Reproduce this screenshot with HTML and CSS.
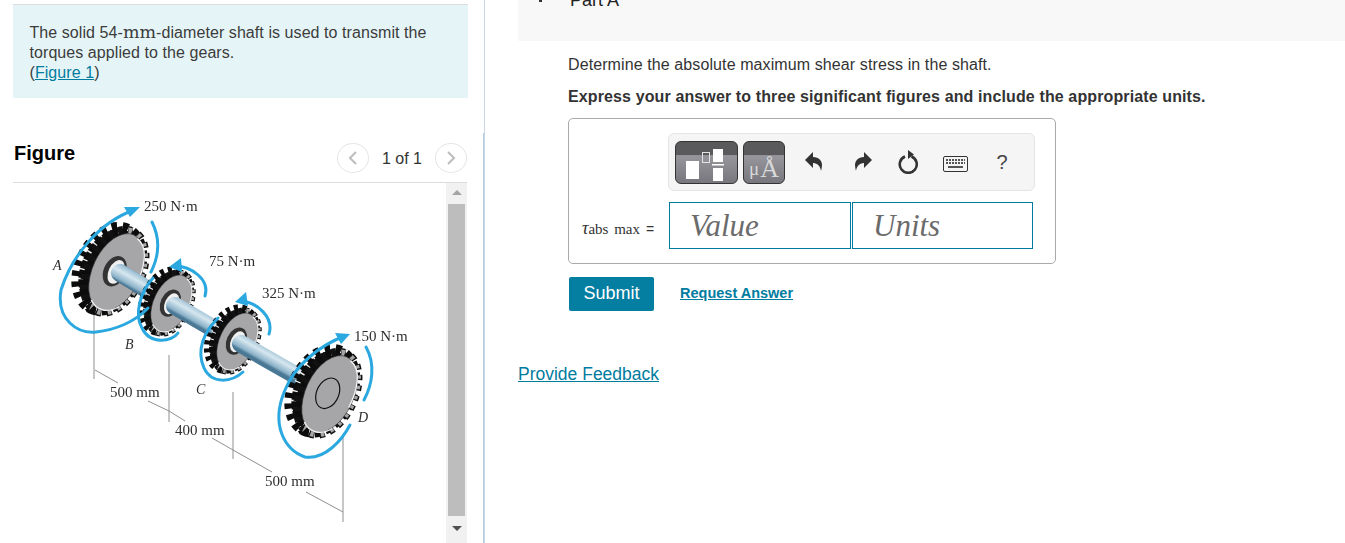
FILE: index.html
```html
<!DOCTYPE html>
<html lang="en">
<head>
<meta charset="utf-8">
<title>Part A</title>
<link rel="stylesheet" href="styles.css">
</head>
<body>
<div class="page">
  <aside class="left">
    <div class="intro">
      <p>The solid 54-<span class="math-unit">mm</span>-diameter shaft is used to transmit the torques applied to the gears.<br>(<a href="#">Figure 1</a>)</p>
    </div>
    <div class="figure-head">
      <h2>Figure</h2>
      <div class="pager">
        <span class="pager-btn"><svg width="12" height="16" viewBox="0 0 12 16"><path d="M9 2 3 8l6 6" class="chev-l"/></svg></span>
        <span class="pager-text">1 of 1</span>
        <span class="pager-btn"><svg width="12" height="16" viewBox="0 0 12 16"><path d="M3 2l6 6-6 6" class="chev-r"/></svg></span>
      </div>
    </div>
    <div class="figure-body">
      <svg class="diagram" width="433" height="360" viewBox="13 183 433 360">
        <defs>
          <linearGradient id="shaft" gradientUnits="userSpaceOnUse" x1="204.500" y1="309" x2="195.500" y2="325">
            <stop offset="0" stop-color="#5f8ea9"/>
            <stop offset=".12" stop-color="#9dc0d4"/>
            <stop offset=".45" stop-color="#d6e7ef"/>
            <stop offset=".85" stop-color="#8db3ca"/>
            <stop offset="1" stop-color="#4a7894"/>
          </linearGradient>
          <clipPath id="right-half"><rect x="-4" y="-60" width="60" height="120"/></clipPath>
          <g id="gear">
            <ellipse cx="-3" rx="28" ry="42" class="teeth-back" pathLength="44"/>
            <ellipse cx="-3" rx="28" ry="42" class="gear-mass"/>
            <ellipse cx="-3" rx="26" ry="40" class="teeth-fleck" pathLength="44"/>
            <ellipse cx="3" rx="26" ry="43" class="teeth-edge" pathLength="44"/>
            <ellipse cx="3" rx="26" ry="43" class="teeth-front" pathLength="44" clip-path="url(#right-half)"/>
            <ellipse cx="5" rx="24" ry="41" class="face"/>
            <path d="M10 -39C24 -36 29 -14 28 4" class="face-rim"/>
            <path d="M-6 36C2 43 14 42 22 30" class="face-rim"/>
          </g>
          <g id="hub">
            <ellipse rx="11" ry="16" class="hub-outer"/>
            <ellipse cx="1.500" rx="7.500" ry="12.500" class="hub-inner"/>
          </g>
        </defs>

        <g class="guides">
          <path d="M94 278V379M169 355V422M233 392V459M343 437V522"/>
          <path d="M95 370 118 383M148 401 169 411 185 421M212 438 233 450 272 472M306 492 343 512"/>
        </g>

        <g transform="translate(112 270) rotate(25)">
          <use href="#gear"/>
          <use href="#hub" x="3"/>
        </g>
        <line x1="120" y1="273" x2="168" y2="302" class="shaft"/>
        <g transform="translate(168 302) rotate(25) scale(.74)">
          <use href="#gear"/>
          <use href="#hub" x="3" transform="scale(1.200)"/>
        </g>
        <line x1="175" y1="306" x2="233" y2="340" class="shaft"/>
        <g transform="translate(234 340) rotate(25) scale(.74)">
          <use href="#gear"/>
          <use href="#hub" x="3" transform="scale(1.200)"/>
        </g>
        <line x1="241" y1="344" x2="325" y2="392" class="shaft"/>
        <g transform="translate(325 392) rotate(25)">
          <use href="#gear"/>
          <ellipse cx="3" rx="11" ry="16" class="hub-end"/>
        </g>

        <g class="torque">
          <path d="M134 210C100 222 72 255 61 290C56 320 78 334 96 332C115 330 135 322 148 308"/>
          <path d="M152 222C161 240 158 258 151 272"/>
          <path d="M174 266C192 266 210 280 205 296"/>
          <path d="M153 278C140 292 134 315 142 328C150 345 172 342 178 333"/>
          <path d="M240 301C258 302 274 318 269 334"/>
          <path d="M218 318C204 332 196 350 204 368C212 385 232 382 243 372"/>
          <path d="M345 336C320 345 295 365 285 390C270 425 285 450 305 457C325 460 342 440 350 425"/>
          <path d="M366 347C376 365 372 385 364 400"/>
        </g>
        <g class="torque-head">
          <path d="M140 207 124 207 130 217Z"/>
          <path d="M169 267 181 258 182 272Z"/>
          <path d="M235 302 246 292 248 306Z"/>
          <path d="M350 334 335 333 341 344Z"/>
        </g>

        <g class="labels">
          <text x="144" y="211">250 N·m</text>
          <text x="209" y="266">75 N·m</text>
          <text x="262" y="298">325 N·m</text>
          <text x="354" y="341">150 N·m</text>
          <text x="110" y="397">500 mm</text>
          <text x="175" y="435">400 mm</text>
          <text x="265" y="486">500 mm</text>
          <text x="53" y="270" class="pt">A</text>
          <text x="125" y="349" class="pt">B</text>
          <text x="196" y="394" class="pt">C</text>
          <text x="358" y="422" class="pt">D</text>
        </g>
      </svg>
      <div class="scrollbar">
        <span class="arrow-up"></span>
        <span class="thumb"></span>
        <span class="arrow-down"></span>
      </div>
    </div>
  </aside>

  <main class="right">
    <header class="part-head"><span class="caret"></span><span class="part-title">Part A</span></header>
    <div class="question">
      <p class="prompt">Determine the absolute maximum shear stress in the shaft.</p>
      <p class="instruction">Express your answer to three significant figures and include the appropriate units.</p>
      <div class="answer-box">
        <div class="palette">
          <button class="tpl tpl-wide" type="button">
            <svg width="44" height="33" viewBox="0 0 44 33">
              <rect x="1" y="12" width="13" height="18" fill="#fff"/>
              <rect x="17.500" y="3.500" width="7" height="10" class="tpl-outline"/>
              <rect x="28" y="0" width="10" height="13" fill="#fff"/>
              <rect x="27" y="15" width="12" height="1.500" fill="#fff"/>
              <rect x="28" y="19" width="10" height="13" fill="#fff"/>
            </svg>
          </button>
          <button class="tpl tpl-unit" type="button"><span class="mu">μ</span><span class="ang">Å</span></button>
          <span class="tool tool-undo"><svg width="18" height="20" viewBox="0 0 18 20"><path d="M0 8 8 0v5c6 0 9 4 9 8 0 2-.5 4-1 6-.5-4-3-8-8-8v5Z"/></svg></span>
          <span class="tool tool-redo"><svg width="18" height="20" viewBox="0 0 18 20"><path d="M18 8 10 0v5C4 5 1 9 1 13c0 2 .5 4 1 6 .5-4 3-8 8-8v5Z"/></svg></span>
          <span class="tool tool-reset"><svg width="22" height="24" viewBox="0 0 22 24"><path d="M7 6.500a8.500 8.500 0 1 0 6.500 0" class="reset-ring"/><path d="M10 0l6 4.500-6 4.500Z"/></svg></span>
          <span class="tool tool-keys"><svg width="25" height="16" viewBox="0 0 25 16"><rect x=".5" y=".5" width="24" height="15" rx="1.500" class="key-body"/><path d="M3 4h19M3 7h19" class="key-row"/><path d="M5 11h15" class="key-space"/></svg></span>
          <span class="tool tool-help">?</span>
        </div>
        <div class="answer-row">
          <span class="answer-label"><i>τ</i><span class="sub">abs max</span><span class="eq">=</span></span>
          <span class="field field-value">Value</span>
          <span class="field field-units">Units</span>
        </div>
      </div>
      <div class="actions">
        <button class="submit" type="button">Submit</button>
        <a class="request" href="#">Request Answer</a>
      </div>
    </div>
    <a class="feedback" href="#">Provide Feedback</a>
  </main>
</div>
</body>
</html>
```
FILE: styles.css
```css
* { box-sizing: border-box; }
html, body { margin: 0; height: 543px; overflow: hidden; background: #fff; }
body { font-family: "Liberation Sans", Arial, sans-serif; font-size: 16px; color: #333; }
a { color: #007c9f; }
p { margin: 0; }

.page { display: flex; height: 543px; }

.left {
  position: relative;
  flex: 0 0 485px;
  padding: 4px 0 0 13px;
  border-right: 1px solid #c7d6e6;
}
.left::after {
  content: "";
  position: absolute;
  top: 133px; bottom: 0; right: 0;
  width: 1px;
  background: #b9cde0;
}

.intro {
  width: 455px;
  height: 94px;
  padding: 18px 17px 0 16.500px;
  background: #e5f5f7;
  border-top: 1px solid #dcdcdc;
  line-height: 20px;
  letter-spacing: .07px;
  color: #3c3c3c;
}
.math-unit { font-family: "DejaVu Serif", serif; font-size: 17.500px; line-height: 16px; letter-spacing: 0; }

.figure-head {
  display: flex;
  justify-content: space-between;
  align-items: flex-start;
  width: 454px;
  height: 85px;
  padding: 44px 0 0;
  border-bottom: 1px solid #dcdcdc;
}
.figure-head h2 { margin: 0 0 0 1px; font-size: 20px; line-height: 23px; font-weight: 700; color: #000; }
.pager { display: flex; align-items: center; margin-top: 1px; }
.pager-btn {
  display: flex; align-items: center; justify-content: center;
  width: 32px; height: 30px;
  border: 1px solid #e6e6e6; border-radius: 50%;
}
.pager-text { margin: 2px 13px 0; line-height: 20px; color: #333; }
.chev-l, .chev-r { fill: none; stroke: #bdbdbd; stroke-width: 2; }

.figure-body { display: flex; width: 454px; height: 360px; }
.diagram { flex: 0 0 433px; display: block; filter: blur(.35px); }
.guides path { fill: none; stroke: #8f8f8f; stroke-width: 1; }
.shaft { stroke: url(#shaft); stroke-width: 18; stroke-linecap: round; }
.teeth-back { fill: none; stroke: #0c0c0c; stroke-width: 14; stroke-dasharray: 1 1; }
.gear-mass { fill: #0c0c0c; }
.teeth-fleck { fill: none; stroke: #f2f2f2; stroke-width: 6; stroke-dasharray: .3 1.7; stroke-dashoffset: -1.350; }
.teeth-edge { fill: none; stroke: #111; stroke-width: 10; stroke-dasharray: 1 1; }
.teeth-front { fill: none; stroke: #a6a6a8; stroke-width: 7; stroke-dasharray: .65 1.350; stroke-dashoffset: -.100; }
.face { fill: #a6a6a8; stroke: #333; stroke-width: .6; }
.face-rim { fill: none; stroke: #f0f0f0; stroke-width: 1.400; }
.hub-outer { fill: #333; }
.hub-inner { fill: #f0f0f0; }
.hub-end { fill: #a6a6a8; stroke: #111; stroke-width: 1.200; }
.torque path { fill: none; stroke: #2aa8df; stroke-width: 3; stroke-linecap: round; }
.torque-head path { fill: #2aa8df; }
.labels text { font-family: "Liberation Serif", serif; font-size: 15px; fill: #2e2e2e; }
.labels .pt { font-style: italic; font-size: 14px; }

.scrollbar {
  display: flex; flex-direction: column; align-items: center;
  flex: 0 0 21px;
  padding-top: 7px;
  background: #f1f1f1;
}
.arrow-up { width: 0; height: 0; border: 5px solid transparent; border-top: 0; border-bottom: 5px solid #a3a3a3; }
.thumb { width: 17px; height: 312px; margin-top: 9px; background: #bdbdbd; }
.arrow-down { width: 0; height: 0; margin-top: 10px; border: 5px solid transparent; border-bottom: 0; border-top: 5px solid #505050; }

.right { flex: 1; padding-left: 33px; min-width: 0; }
.part-head {
  position: relative;
  height: 41px;
  background: #f8f8f8;
  overflow: hidden;
}
.part-title {
  position: absolute; left: 52px; top: -13px;
  font-size: 18px; line-height: 26px; color: #222;
}
.caret {
  position: absolute; left: 21px; top: 0;
  width: 3px; height: 2px; background: #333;
}
.question { padding-left: 50px; }
.prompt { margin-top: 15px; line-height: 18px; letter-spacing: .1px; color: #333; }
.instruction { margin-top: 14px; line-height: 18px; font-weight: 700; letter-spacing: .12px; color: #333; }

.answer-box {
  width: 488px;
  height: 146px;
  margin-top: 12px;
  padding: 14px 0 0 99px;
  border: 1px solid #aaa;
  border-radius: 5px;
}
.palette {
  display: flex; align-items: center;
  width: 367px; height: 58px;
  padding-left: 6px;
  background: #f5f5f5;
  border: 1px solid #e4e4e4;
  border-radius: 6px;
}
.tpl {
  display: flex; align-items: flex-end; justify-content: center;
  height: 43px; padding: 0;
  border: 1px solid #333; border-radius: 6px;
  background: linear-gradient(#5a5a5c 0, #5a5a5c 32%, #96969c 33%, #77777d 100%);
}
.tpl-wide { width: 63px; padding-bottom: 1px; }
.tpl-unit {
  width: 42px; margin-left: 5px;
  font-family: "Liberation Serif", serif; color: #d8d8d8; line-height: 28px;
}
.tpl-outline { fill: none; stroke: #e4e4e4; }
.mu { font-size: 19px; margin-right: 1px; }
.ang { font-size: 26px; }
.tool { display: flex; align-items: center; justify-content: center; fill: #333; }
.tool-undo { width: 18px; margin-left: 20px; }
.tool-redo { width: 18px; margin-left: 31px; }
.tool-reset { width: 22px; margin-left: 26px; }
.tool-keys { width: 25px; margin-left: 23px; margin-top: 4px; }
.tool-help { width: 12px; margin-left: 28px; font-size: 20px; color: #444; }
.reset-ring { fill: none; stroke: #333; stroke-width: 2.600; }
.key-body { fill: #f4f4f4; stroke: #333; }
.key-row { fill: none; stroke: #555; stroke-width: 2; stroke-dasharray: 2 1; }
.key-space { fill: none; stroke: #555; stroke-width: 2; }

.answer-row { display: flex; align-items: center; margin: 11px 0 0 -87px; }
.answer-label {
  display: flex; align-items: baseline;
  width: 88px; padding: 6px 0 0 1px;
  font-family: "Liberation Serif", serif; font-size: 15px; color: #333; white-space: nowrap;
}
.answer-label i { font-size: 18px; }
.sub { word-spacing: 2px; }
.eq { margin-left: 6px; font-family: "Liberation Sans", sans-serif; font-size: 14px; }
.field {
  display: block; height: 47px; padding: 6px 0 0 20px;
  border: 1px solid #007c9f;
  font-family: "Liberation Serif", serif; font-style: italic; font-size: 31px; line-height: 34px; color: #6b6b6b;
}
.field-value { width: 182px; }
.field-units { width: 181px; margin-left: 1px; }

.actions { display: flex; align-items: center; margin-top: 13px; }
.submit {
  width: 85px; height: 34px; margin-left: 1px; padding: 0 0 2px;
  background: #047ea1; border: 0; border-radius: 2px;
  font-family: "Liberation Sans", sans-serif; font-size: 18px; color: #fff;
}
.request { margin: 0 0 3px 26px; font-size: 14.500px; font-weight: 700; color: #007c9f; }
.feedback { display: block; margin-top: 52px; width: max-content; font-size: 17.500px; line-height: 22px; }
```
